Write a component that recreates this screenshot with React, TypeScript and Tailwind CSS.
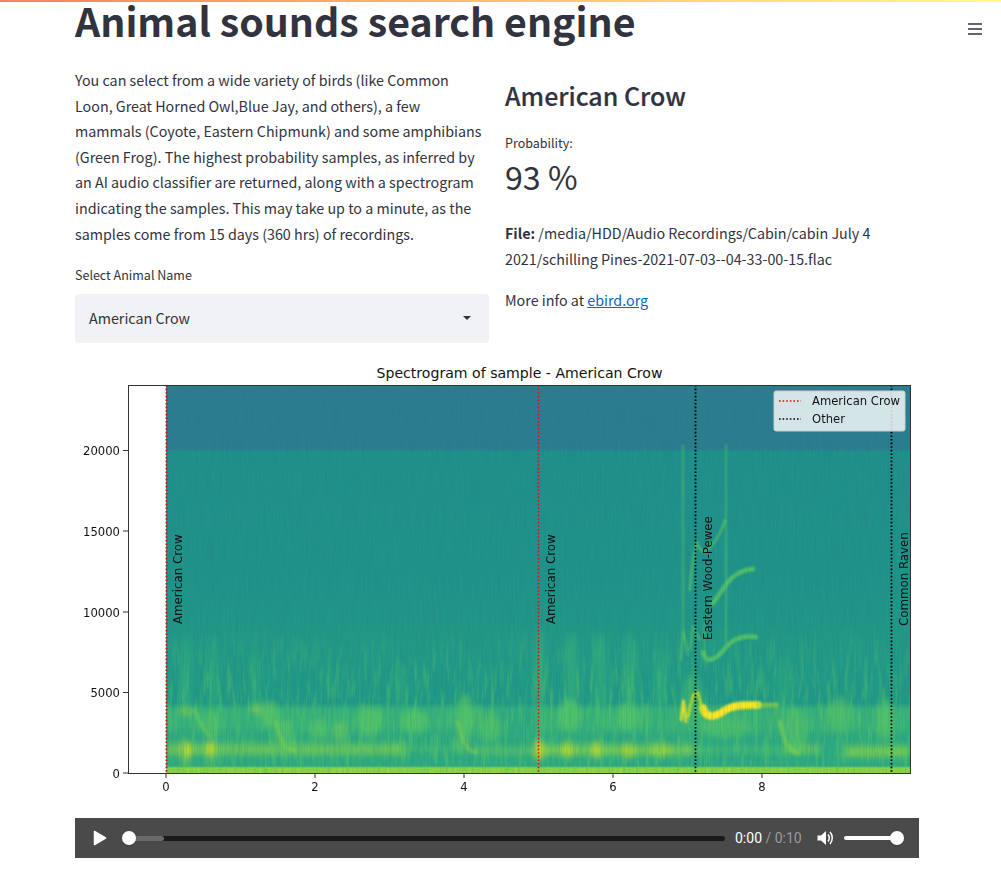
import React from "react";

const bodyFont = "font-['Noto_Sans_CJK_SC','Source_Sans_Pro',sans-serif]";

// soft patches of the spectrogram: x, y, rx, ry, colour, opacity
const blobs: [number, number, number, number, string, number][] = [
  // first call
  [186, 680, 6, 45, "#35b779", 0.45],
  [213, 680, 6, 45, "#35b779", 0.4],
  [186, 750, 5, 9, "#d8e219", 0.9],
  [211, 749, 5, 8, "#d8e219", 0.8],
  [186, 763, 4, 6, "#7ad151", 0.6],
  [211, 762, 4, 6, "#7ad151", 0.6],
  [186, 711, 7, 5, "#7ad151", 0.75],
  [256, 708, 5, 5, "#a0da39", 0.7],
  [212, 725, 9, 14, "#5ec962", 0.6],
  [270, 715, 9, 14, "#5ec962", 0.7],
  [285, 735, 10, 16, "#5ec962", 0.65],
  [318, 730, 10, 10, "#5ec962", 0.65],
  [340, 732, 8, 10, "#7ad151", 0.55],
  [370, 722, 12, 16, "#5ec962", 0.65],
  [415, 722, 14, 12, "#5ec962", 0.65],
  [465, 718, 9, 24, "#5ec962", 0.65],
  [462, 745, 9, 9, "#5ec962", 0.55],
  [490, 728, 12, 14, "#5ec962", 0.55],
  [255, 680, 7, 28, "#35b779", 0.35],
  [400, 685, 7, 24, "#35b779", 0.3],
  // calls around 5 - 7
  [540, 685, 5, 60, "#4ac16d", 0.4],
  [571, 680, 7, 48, "#35b779", 0.5],
  [600, 680, 7, 48, "#35b779", 0.5],
  [630, 680, 7, 48, "#35b779", 0.5],
  [660, 690, 7, 40, "#35b779", 0.45],
  [539, 750, 5, 11, "#d8e219", 0.8],
  [568, 750, 5, 9, "#d8e219", 0.7],
  [597, 750, 5, 9, "#d8e219", 0.7],
  [628, 751, 6, 8, "#c8e020", 0.65],
  [660, 750, 9, 7, "#b5de2b", 0.65],
  [570, 715, 11, 16, "#5ec962", 0.65],
  [628, 716, 11, 14, "#5ec962", 0.65],
  [785, 685, 10, 26, "#35b779", 0.35],
  [795, 730, 12, 22, "#5ec962", 0.55],
  [840, 715, 12, 18, "#5ec962", 0.55],
  [885, 720, 9, 22, "#5ec962", 0.6],
  [725, 728, 26, 10, "#5ec962", 0.5],
  [692, 700, 12, 25, "#4ac16d", 0.45],
];

// horizontal bands: x, y, width, height, colour, opacity
const bands: [number, number, number, number, string, number][] = [
  [166, 744, 240, 11, "#8bd646", 0.65],
  [166, 708, 330, 22, "#4ac16d", 0.4],
  [400, 747, 70, 5, "#5ec962", 0.35],
  [470, 747, 70, 7, "#7ad151", 0.5],
  [535, 745, 160, 10, "#95d840", 0.7],
  [695, 747, 90, 6, "#5ec962", 0.5],
  [785, 745, 35, 9, "#7ad151", 0.7],
  [845, 746, 65, 11, "#95d840", 0.7],
  [535, 708, 375, 24, "#4ac16d", 0.4],
];

const chirps: [string, string, number, number][] = [
  // strong call and its harmonics
  ["M703 708 C706 720 716 717 727 709 C738 704 748 705 758 705", "#fde725", 7.5, 1],
  ["M758 705 L776 705", "#a0da39", 5, 0.65],
  ["M703 652 C705 664 715 662 727 646 C737 636 746 636 756 637", "#5ec962", 4.5, 0.85],
  ["M704 625 C704 640 704 648 705 655", "#5ec962", 2, 0.5],
  ["M713 603 C722 592 730 570 753 569", "#5ec962", 4.5, 0.85],
  ["M681 720 L683.5 700 L686 722", "#fde725", 2.5, 0.9],
  ["M688 717 L693 695 L698 693 L703 712", "#d8e219", 2.5, 0.9],
  ["M683 445 L683 640", "#5ec962", 1.6, 0.7],
  ["M726 445 L726 650", "#5ec962", 1.6, 0.7],
  ["M690 590 C692 565 694 550 697 543 C702 555 706 552 712 545 C718 538 722 530 725 520", "#5ec962", 2.2, 0.8],
  ["M681 660 L683 630 L688 655", "#5ec962", 2, 0.7],
  ["M690 650 L693 627 L700 640", "#5ec962", 2, 0.7],
  ["M780 722 C784 740 788 752 798 753", "#7ad151", 4.5, 0.65],
  ["M458 722 C462 740 466 752 476 752", "#7ad151", 4, 0.55],
  ["M276 722 C280 738 284 750 294 750", "#7ad151", 4, 0.55],
  ["M194 710 C202 725 206 735 210 736", "#7ad151", 4, 0.45],
];

function Spectrogram() {
  const xTicks = [
    [166, "0"],
    [315, "2"],
    [464, "4"],
    [613, "6"],
    [762, "8"],
  ] as const;
  const yTicks = [
    [773, "0"],
    [692.5, "5000"],
    [612, "10000"],
    [531, "15000"],
    [450.5, "20000"],
  ] as const;
  const labelClass = "font-['DejaVu_Sans',sans-serif] text-[11.6px] fill-[#111]";
  const dots = "1.6 2";

  return (
    <svg viewBox="75 360 844 445" className="block h-[445px] w-[844px]">
      <defs>
        <linearGradient id="base" x1="0" y1="385" x2="0" y2="773" gradientUnits="userSpaceOnUse">
          <stop offset="0" stopColor="#2c7e8e" />
          <stop offset="0.165" stopColor="#2c7d8e" />
          <stop offset="0.171" stopColor="#20908b" />
          <stop offset="0.5" stopColor="#209489" />
          <stop offset="0.68" stopColor="#229a87" />
          <stop offset="0.82" stopColor="#209a88" />
          <stop offset="0.835" stopColor="#2fab81" />
          <stop offset="0.982" stopColor="#2daa83" />
          <stop offset="0.987" stopColor="#90d743" />
          <stop offset="1" stopColor="#90d743" />
        </linearGradient>
        <linearGradient id="fadeIn" x1="0" y1="620" x2="0" y2="773" gradientUnits="userSpaceOnUse">
          <stop offset="0" stopColor="#000" />
          <stop offset="0.5" stopColor="#fff" />
        </linearGradient>
        <mask id="lowerOnly" maskUnits="userSpaceOnUse" x="166" y="385" width="744" height="388">
          <rect x="166" y="385" width="744" height="388" fill="url(#fadeIn)" />
        </mask>
        <filter id="grain" x="0" y="0" width="1" height="1" colorInterpolationFilters="sRGB">
          <feTurbulence type="fractalNoise" baseFrequency="0.75 0.03" numOctaves="2" seed="4" />
          <feColorMatrix values="0 0 0 0 0.15  0 0 0 0 0.45  0 0 0 0 0.52  2 0 0 0 -0.8" />
        </filter>
        <filter id="grainLight" x="0" y="0" width="1" height="1" colorInterpolationFilters="sRGB">
          <feTurbulence type="fractalNoise" baseFrequency="0.22 0.03" numOctaves="3" seed="9" />
          <feColorMatrix values="0 0 0 0 0.35  0 0 0 0 0.78  0 0 0 0 0.4  3 0 0 0 -1.35" />
        </filter>
        <filter id="soft" x="-50%" y="-50%" width="200%" height="200%">
          <feGaussianBlur stdDeviation="3" />
        </filter>
        <filter id="softer" x="-20%" y="-20%" width="140%" height="140%">
          <feGaussianBlur stdDeviation="1.1" />
        </filter>
        <clipPath id="axes">
          <rect x="166" y="385" width="744" height="388" />
        </clipPath>
      </defs>

      <text x="519.5" y="378" textAnchor="middle" className="font-['DejaVu_Sans',sans-serif] text-[14.1px] fill-[#111]">
        Spectrogram of sample - American Crow
      </text>

      <g clipPath="url(#axes)">
        <rect x="166" y="385" width="744" height="388" fill="url(#base)" />
        <g filter="url(#soft)">
          {bands.map(([x, y, w, h, c, o], i) => (
            <rect key={i} x={x} y={y} width={w} height={h} fill={c} opacity={o} />
          ))}
          {blobs.map(([x, y, rx, ry, c, o], i) => (
            <ellipse key={i} cx={x} cy={y} rx={rx} ry={ry} fill={c} opacity={o} />
          ))}
        </g>
        <g mask="url(#lowerOnly)">
          <rect x="166" y="620" width="744" height="153" filter="url(#grainLight)" opacity="0.5" />
        </g>
        <g filter="url(#softer)" fill="none" strokeLinecap="round">
          {chirps.map(([d, c, w, o], i) => (
            <path key={i} d={d} stroke={c} strokeWidth={w} opacity={o} />
          ))}
        </g>
        <rect x="166" y="385" width="744" height="388" filter="url(#grain)" opacity="0.22" />
      </g>

      <g strokeDasharray={dots}>
        <path d="M166.5 385V773" stroke="#ff0000" strokeWidth="2" />
        <path d="M538.5 385V773" stroke="#ff0000" strokeWidth="1.5" />
        <path d="M695.5 385V773" stroke="#000" strokeWidth="1.8" />
        <path d="M891.5 385V773" stroke="#000" strokeWidth="1.8" />
      </g>

      <g className="font-['DejaVu_Sans',sans-serif] text-[11.8px] fill-[#111]">
        <text transform="translate(182 624) rotate(-90)">American Crow</text>
        <text transform="translate(555 624) rotate(-90)">American Crow</text>
        <text transform="translate(712 640) rotate(-90)">Eastern Wood-Pewee</text>
        <text transform="translate(908 626) rotate(-90)">Common Raven</text>
      </g>

      <rect x="128.5" y="385.5" width="782" height="388" fill="none" stroke="#333" strokeWidth="1" />

      {xTicks.map(([x, t]) => (
        <g key={t}>
          <path d={`M${x} 773V778`} stroke="#333" />
          <text x={x} y="791" textAnchor="middle" className={labelClass}>
            {t}
          </text>
        </g>
      ))}
      {yTicks.map(([y, t]) => (
        <g key={t}>
          <path d={`M128 ${y}H123`} stroke="#333" />
          <text x="120" y={y + 4.5} textAnchor="end" className={labelClass}>
            {t}
          </text>
        </g>
      ))}

      <rect x="774" y="391" width="131" height="40" rx="2" fill="#fff" fillOpacity="0.8" stroke="#ccc" />
      <path d="M779 401H801" stroke="#ff0000" strokeWidth="1.6" strokeDasharray={dots} />
      <path d="M779 419H801" stroke="#000" strokeWidth="1.6" strokeDasharray={dots} />
      <text x="812" y="405" className={labelClass}>
        American Crow
      </text>
      <text x="812" y="423" className={labelClass}>
        Other
      </text>
    </svg>
  );
}

function AudioPlayer() {
  return (
    <div className="flex h-10 items-center bg-[#4a4a4a] pl-[18px] pr-[22px] font-['Roboto',sans-serif]">
      <svg width="14" height="16" viewBox="0 0 14 16" className="shrink-0">
        <path d="M1.5 1.5L12.5 8L1.5 14.5Z" fill="#fff" stroke="#fff" strokeWidth="1.5" strokeLinejoin="round" />
      </svg>
      <div className="relative ml-[22px] h-[5px] w-[596px] rounded-full bg-[#1a1a1a]">
        <div className="h-[5px] w-[35px] rounded-full bg-[#696969]" />
        <div className="absolute left-[-7px] top-[-5px] h-[14px] w-[14px] rounded-full bg-white shadow" />
      </div>
      <div className="ml-[10px] w-[82px] shrink-0 text-[14px] text-white">
        0:00 <span className="text-[#9a9a9a]">/ 0:10</span>
      </div>
      <svg width="17" height="16" viewBox="0 0 17 16" className="shrink-0">
        <path d="M0.5 5.5H4L9 1V15L4 10.5H0.5Z" fill="#fff" />
        <path d="M11 4.5C12.5 6.5 12.5 9.5 11 11.5" fill="none" stroke="#fff" strokeWidth="1.5" />
        <path d="M13 2C16 5.5 16 10.5 13 14" fill="none" stroke="#fff" strokeWidth="1.5" />
      </svg>
      <div className="relative ml-[10px] h-1 w-[53px] rounded-full bg-white">
        <div className="absolute right-[-7px] top-[-5px] h-[14px] w-[14px] rounded-full bg-white shadow" />
      </div>
    </div>
  );
}

export default function App() {
  return (
    <div className={`relative h-[877px] w-[1001px] overflow-hidden bg-white text-[#31333f] ${bodyFont}`}>
      <div className="h-[2px] bg-gradient-to-r from-[#ff7e5f] to-[#fffd80]" />

      <svg width="14" height="12" viewBox="0 0 14 12" className="absolute left-[968px] top-[23px]">
        <path d="M0 1H14M0 6H14M0 11H14" stroke="#31333f" strokeWidth="1.5" />
      </svg>

      <div className="mx-[75px] w-[844px]">
        <h1 className="text-[39.3px] font-bold leading-[36px]">Animal sounds search engine</h1>

        <div className="mt-[29px] flex gap-4">
          <div className="w-[414px]">
            <p className="text-[14.3px] leading-[25.6px]">
              You can select from a wide variety of birds (like Common Loon, Great Horned Owl,Blue Jay, and others), a
              few mammals (Coyote, Eastern Chipmunk) and some amphibians (Green Frog). The highest probability samples,
              as inferred by an AI audio classifier are returned, along with a spectrogram indicating the samples. This
              may take up to a minute, as the samples come from 15 days (360 hrs) of recordings.
            </p>
            <label className="mt-[19px] block text-[12.5px] leading-5">Select Animal Name</label>
            <div className="mt-[9px] flex h-[49px] items-center justify-between rounded bg-[#f0f2f6] pb-[2px] pl-[14px] pr-[18px] text-[14.3px]">
              <span>American Crow</span>
              <span className="h-0 w-0 border-x-[4px] border-t-[4px] border-x-transparent border-t-[#31333f]" />
            </div>
          </div>

          <div className="w-[414px]">
            <h2 className="mt-[10px] text-[25px] font-medium leading-[36px] [-webkit-text-stroke:0.2px_#31333f]">
              American Crow
            </h2>
            <div className="mt-[20px] text-[12.5px] leading-5">Probability:</div>
            <div className="mt-[1px] text-[32.2px] leading-[44px]">93 %</div>
            <p className="mt-[22px] text-[14.3px] leading-[25.6px]">
              <strong className="font-semibold">File:</strong> /media/HDD/Audio Recordings/Cabin/cabin July 4
              2021/schilling Pines-2021-07-03--04-33-00-15.flac
            </p>
            <p className="mt-4 text-[14.3px] leading-[25.6px]">
              More info at{" "}
              <a href="#" className="text-[#0068c9] underline">
                ebird.org
              </a>
            </p>
          </div>
        </div>

        <div className="mt-[17px]">
          <Spectrogram />
        </div>
        <div className="mt-[13px]">
          <AudioPlayer />
        </div>
      </div>
    </div>
  );
}
